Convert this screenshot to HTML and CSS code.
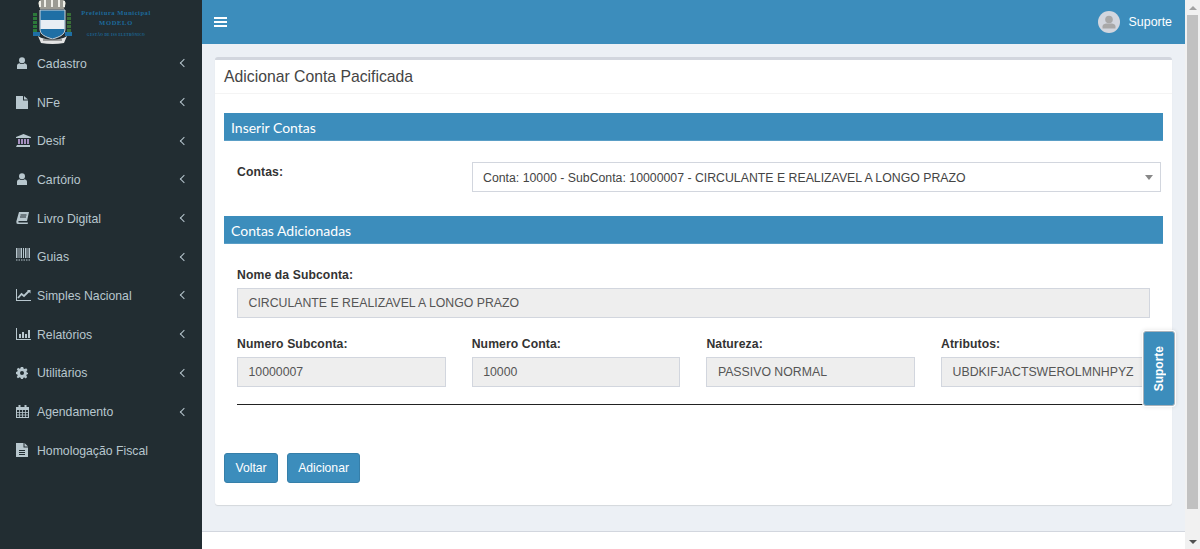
FILE: index.html
```
<!DOCTYPE html>
<html lang="pt">
<head>
<meta charset="utf-8">
<title>Adicionar Conta Pacificada</title>
<link rel="stylesheet" href="styles.css">
</head>
<body>
<div class="app">
  <aside class="sidebar">
    <div class="logo">
      <svg class="crest" width="40" height="44" viewBox="0 0 40 44">
        <path d="M5 3 L7 0 H31 L33 3 L31 9 H7Z" fill="#9c9c94"/>
        <path d="M7 1v6M12 0v7M19 0v7M26 0v7M31 1v6" stroke="#efefe8" stroke-width="2"/>
        <path d="M2 13V32" stroke="#2c7a3a" stroke-width="4" stroke-dasharray="3 1"/>
        <path d="M36 13V32" stroke="#3a6f38" stroke-width="4" stroke-dasharray="3 1"/>
        <path d="M7 10 H32 V29 C32 35 26 37 19.500 39 C13 37 7 35 7 29Z" fill="#1f6fa5" stroke="#cfd6dc" stroke-width="1"/>
        <rect x="7.500" y="20" width="24" height="9" fill="#e8eef4"/>
        <path d="M0 32h7v4H0zM32 32h7v4h-7z" fill="#1f6fa5"/>
        <path d="M5 36 C12 41 27 41 34 36 L31 43 Q19.500 45 8 43Z" fill="#e4e4e4"/>
        <path d="M10 40h19" stroke="#555" stroke-width="1"/>
      </svg>
      <div class="brand">
        <span class="brand-a">Prefeitura Municipal</span>
        <span class="brand-b">MODELO</span>
        <span class="brand-c">GESTÃO DE ISS ELETRÔNICO</span>
      </div>
    </div>
    <nav class="menu">
      <a class="item"><span class="ico"><svg width="12" height="12" viewBox="0 0 12 12"><circle cx="6" cy="3.200" r="3"/><path d="M1 12V8.500Q1 6.500 3.500 6.200Q6 8 8.500 6.200Q11 6.500 11 8.500V12Z"/></svg></span><span class="label">Cadastro</span><span class="chev"></span></a>
      <a class="item"><span class="ico"><svg width="12" height="13" viewBox="0 0 12 13"><path d="M0 0H7V4.500H12V13H0Z"/><path d="M8 0L12 3.500H8Z"/></svg></span><span class="label">NFe</span><span class="chev"></span></a>
      <a class="item"><span class="ico"><svg width="15" height="13" viewBox="0 0 15 13"><path d="M7.500 0L15 3V4H0V3Z"/><path d="M2 5h2v5H2zM5 5h2v5H5zM8 5h2v5H8zM11 5h2v5h-2z" fill="#a58fc0"/><path d="M1 11h13v2H0z"/></svg></span><span class="label">Desif</span><span class="chev"></span></a>
      <a class="item"><span class="ico"><svg width="12" height="12" viewBox="0 0 12 12"><circle cx="6" cy="3.200" r="3"/><path d="M1 12V8.500Q1 6.500 3.500 6.200Q6 8 8.500 6.200Q11 6.500 11 8.500V12Z"/></svg></span><span class="label">Cartório</span><span class="chev"></span></a>
      <a class="item"><span class="ico"><svg width="13" height="12" viewBox="0 0 13 12"><path d="M3 0H13L11 9H2.500Q2 10.500 3 10.500H12L11.700 12H2Q0 12 .3 9.500Z"/><path d="M4.500 3h6M4 5h6" stroke="#222d32" stroke-width="1"/></svg></span><span class="label">Livro Digital</span><span class="chev"></span></a>
      <a class="item"><span class="ico ico-up"><svg width="14" height="13" viewBox="0 0 14 13"><path d="M0 0h1.500v10H0zM2.500 0h1v10h-1zM4.500 0h1.500v10H4.500zM7 0h1v10H7zM9 0h1.500v10H9zM11.500 0h1v10h-1zM13 0h1v10h-1z"/><path d="M0 12h14" stroke-width="1" stroke="#b8c7ce" stroke-dasharray="1.500 1"/></svg></span><span class="label">Guias</span><span class="chev"></span></a>
      <a class="item"><span class="ico"><svg width="15" height="12" viewBox="0 0 15 12"><path d="M0 0h1v11h14v1H0z"/><path d="M2 9L5.500 5L8 7L13 2" fill="none" stroke="#b8c7ce" stroke-width="1.800"/><path d="M11 1h3.500v3.500z"/></svg></span><span class="label">Simples Nacional</span><span class="chev"></span></a>
      <a class="item"><span class="ico"><svg width="15" height="12" viewBox="0 0 15 12"><path d="M0 0h1v11h14v1H0z"/><path d="M3 6h2v4H3zM6 4h2v6H6zM9 6h2v4H9zM12 2h2v8h-2z"/></svg></span><span class="label">Relatórios</span><span class="chev"></span></a>
      <a class="item"><span class="ico"><svg width="12" height="12" viewBox="0 0 12 12"><path fill-rule="evenodd" d="M4.800 0H7.200L7.500 1.600L8.800 2.100L10.200 1.300L11.500 3L10.400 4.200L10.700 5.300L12 6V7L10.700 7.500L10.300 8.800L11.200 10.100L9.700 11.400L8.500 10.400L7.300 10.800L7 12H5L4.600 10.800L3.400 10.300L2 11.200L.7 9.900L1.700 8.600L1.300 7.400L0 7V5L1.300 4.600L1.700 3.400L.8 2.200L2.200 .8L3.500 1.700L4.500 1.300ZM6 4A2 2 0 1 0 6 8A2 2 0 1 0 6 4Z"/></svg></span><span class="label">Utilitários</span><span class="chev"></span></a>
      <a class="item"><span class="ico"><svg width="13" height="13" viewBox="0 0 13 13"><path fill-rule="evenodd" d="M0 2H2.500V0H4.500V2H8.500V0H10.500V2H13V13H0ZM1 5V12H12V5Z"/><path d="M3.500 5v7M6.500 5v7M9.500 5v7M1 7.500h11M1 10h11" stroke="#b8c7ce" stroke-width=".8"/></svg></span><span class="label">Agendamento</span><span class="chev"></span></a>
      <a class="item"><span class="ico"><svg width="12" height="14" viewBox="0 0 12 14"><path fill-rule="evenodd" d="M0 0H7.500V4.500H12V14H0ZM3 7V8H9V7ZM3 9V10H9V9ZM3 11V12H9V11Z"/><path d="M8.500 0L12 3.500H8.500Z"/></svg></span><span class="label">Homologação Fiscal</span></a>
    </nav>
  </aside>

  <div class="main">
    <header class="topbar">
      <svg class="burger" width="13" height="10" viewBox="0 0 13 10"><path d="M0 0h13v2H0zM0 4h13v2H0zM0 8h13v2H0z" fill="#fff"/></svg>
      <div class="user">
        <span class="avatar"><svg width="22" height="22" viewBox="0 0 22 22"><circle cx="11" cy="11" r="11" fill="#d2d6de"/><circle cx="11" cy="8.500" r="3.800" fill="#a8a8a8"/><path d="M4.500 17.500V15.500Q4.500 13 8 12.500H14Q17.500 13 17.500 15.500V17.500Z" fill="#a8a8a8"/></svg></span>
        <span class="user-name">Suporte</span>
      </div>
    </header>

    <section class="content">
      <div class="box">
        <h3 class="box-title">Adicionar Conta Pacificada</h3>
        <div class="box-body">
          <h4 class="band">Inserir Contas</h4>
          <div class="accounts-row">
            <label class="field-label accounts-label">Contas:</label>
            <div class="select">
              <span class="select-text">Conta: 10000 - SubConta: 10000007 - CIRCULANTE E REALIZAVEL A LONGO PRAZO</span>
              <i class="caret"></i>
            </div>
          </div>

          <h4 class="band">Contas Adicionadas</h4>
          <div class="details">
            <div class="field">
              <label class="field-label">Nome da Subconta:</label>
              <div class="readonly">CIRCULANTE E REALIZAVEL A LONGO PRAZO</div>
            </div>
            <div class="four">
              <div class="field">
                <label class="field-label">Numero Subconta:</label>
                <div class="readonly">10000007</div>
              </div>
              <div class="field">
                <label class="field-label">Numero Conta:</label>
                <div class="readonly">10000</div>
              </div>
              <div class="field">
                <label class="field-label">Natureza:</label>
                <div class="readonly">PASSIVO NORMAL</div>
              </div>
              <div class="field">
                <label class="field-label">Atributos:</label>
                <div class="readonly">UBDKIFJACTSWEROLMNHPYZ</div>
              </div>
            </div>
            <hr class="rule">
          </div>

          <div class="actions">
            <button class="btn">Voltar</button>
            <button class="btn">Adicionar</button>
          </div>
        </div>
      </div>
    </section>
    <footer class="footer"></footer>
    <div class="support-tab"><span>Suporte</span></div>
  </div>

  <div class="scrollbar">
    <div class="sb-btn"><i class="sb-up"></i></div>
    <div class="sb-thumb"></div>
    <div class="sb-btn sb-end"><i class="sb-down"></i></div>
  </div>
</div>
</body>
</html>
```

FILE: styles.css
```
* { box-sizing: border-box; }
html, body { margin: 0; height: 100%; overflow: hidden; }
body { font-family: "Liberation Sans", Arial, sans-serif; font-size: 12.300px; color: #333; }
.app { display: flex; height: 549px; width: 1200px; }

.sidebar { width: 202px; flex: none; background: #222d32; display: flex; flex-direction: column; }
.logo { height: 44px; display: flex; padding-left: 33px; overflow: hidden; }
.crest { flex: none; display: block; }
.brand { display: flex; flex-direction: column; align-items: center; width: 80px; margin-left: 3px; color: #1c6a9c; font-family: "Liberation Serif", serif; font-weight: bold; }
.brand-a { font-size: 6.500px; line-height: 7px; margin-top: 9px; white-space: nowrap; letter-spacing: .55px; }
.brand-b { font-size: 6.500px; line-height: 7px; margin-top: 3px; letter-spacing: .7px; }
.brand-c { font-size: 3.500px; line-height: 4px; margin-top: 7px; white-space: nowrap; letter-spacing: .3px; }
.menu { display: flex; flex-direction: column; }
.item { height: 38.700px; display: flex; align-items: center; padding-left: 16px; color: #b8c7ce; font-size: 12.250px; }
.ico { width: 21px; flex: none; display: flex; align-items: center; }
.ico-up { margin-top: -4px; }
.ico svg { fill: #b8c7ce; display: block; }
.label { flex: 1; white-space: nowrap; padding-top: 1px; }
.chev { width: 6px; height: 6px; border-left: 1.600px solid #b8c7ce; border-bottom: 1.600px solid #b8c7ce; transform: rotate(45deg); margin-right: 15px; }

.main { flex: 1; min-width: 0; display: flex; flex-direction: column; position: relative; background: #ecf0f5; }
.topbar { height: 44px; flex: none; background: #3c8dbc; display: flex; align-items: center; justify-content: space-between; padding: 0 13px 0 12px; }
.burger { display: block; }
.user { display: flex; align-items: center; gap: 9px; color: #fff; font-size: 12.400px; }
.avatar { width: 22px; height: 22px; display: block; }
.avatar svg { display: block; }

.content { flex: 1; padding: 13px 13px 26px 13px; }
.box { height: 448px; background: #fff; border-top: 3px solid #d2d6de; border-radius: 3px; box-shadow: 0 1px 1px rgba(0,0,0,.1); }
.box-title { margin: 0; height: 34px; padding: 0 9px; font-size: 15.750px; line-height: 33px; font-weight: 400; color: #444; border-bottom: 1px solid #f4f4f4; }
.box-body { padding: 19px 9px 0; }
.band { margin: 0; height: 28px; padding-left: 7px; background: #3c8dbc; color: #fff; font-family: Lato, "Noto Sans", sans-serif; font-size: 14px; line-height: 29px; font-weight: 400; border-bottom: 1px solid #5a9ec6; }
.accounts-row { display: flex; height: 75px; padding: 21px 2px 0 13px; }
.field-label { display: block; font-size: 12.200px; font-weight: 700; color: #333; letter-spacing: .1px; }
.accounts-label { width: 235px; flex: none; line-height: 20px; }
.select { flex: 1; height: 30px; border: 1px solid #d2d6de; display: flex; align-items: center; justify-content: space-between; padding: 0 7px 0 10px; font-size: 12.300px; color: #444; }
.select-text { padding-top: 2px; }
.caret { width: 0; height: 0; border: 4px solid transparent; border-top: 5px solid #888; border-bottom: 0; }

.details { padding: 23px 13px 0; height: 209px; }
.field .field-label { line-height: 17px; margin-bottom: 4px; }
.readonly { height: 30px; line-height: 28px; background: #eee; border: 1px solid #d2d6de; padding: 0 10.500px; font-size: 12.300px; color: #555; white-space: nowrap; overflow: hidden; }
.four { display: grid; grid-template-columns: repeat(4, 208.500px); column-gap: 26.200px; margin-top: 18px; }
.rule { margin: 17px 0 0; border: 0; border-top: 1px solid #222; width: 913px; }
.actions { display: flex; gap: 8.500px; }
.btn { height: 30px; padding: 0 10.500px; background: #3c8dbc; border: 1px solid #367fa9; border-radius: 3px; color: #fff; font: 12.200px "Liberation Sans", Arial, sans-serif; }

.footer { height: 18px; flex: none; background: #fff; border-top: 1px solid #d2d6de; }
.support-tab { position: absolute; left: 941px; top: 331px; width: 32px; height: 75px; background: #3c8dbc; border: 1px solid #a9b3bb; border-radius: 3px; box-shadow: 0 0 0 1px rgba(255,255,255,.9), 0 0 4px 1px rgba(0,0,0,.1); display: flex; align-items: center; justify-content: center; }
.support-tab span { writing-mode: vertical-rl; transform: rotate(180deg); color: #fff; font-size: 12px; font-weight: 700; }

.scrollbar { width: 15px; flex: none; background: #f1f1f1; display: flex; flex-direction: column; }
.sb-btn { height: 15px; flex: none; display: flex; align-items: center; justify-content: center; }
.sb-end { margin-top: auto; }
.sb-thumb { height: 494px; flex: none; background: #c1c1c1; margin: 0 2px; }
.sb-up { border: 4px solid transparent; border-bottom: 4px solid #a3a3a3; border-top: 0; }
.sb-down { border: 4px solid transparent; border-top: 4px solid #505050; border-bottom: 0; }
```
